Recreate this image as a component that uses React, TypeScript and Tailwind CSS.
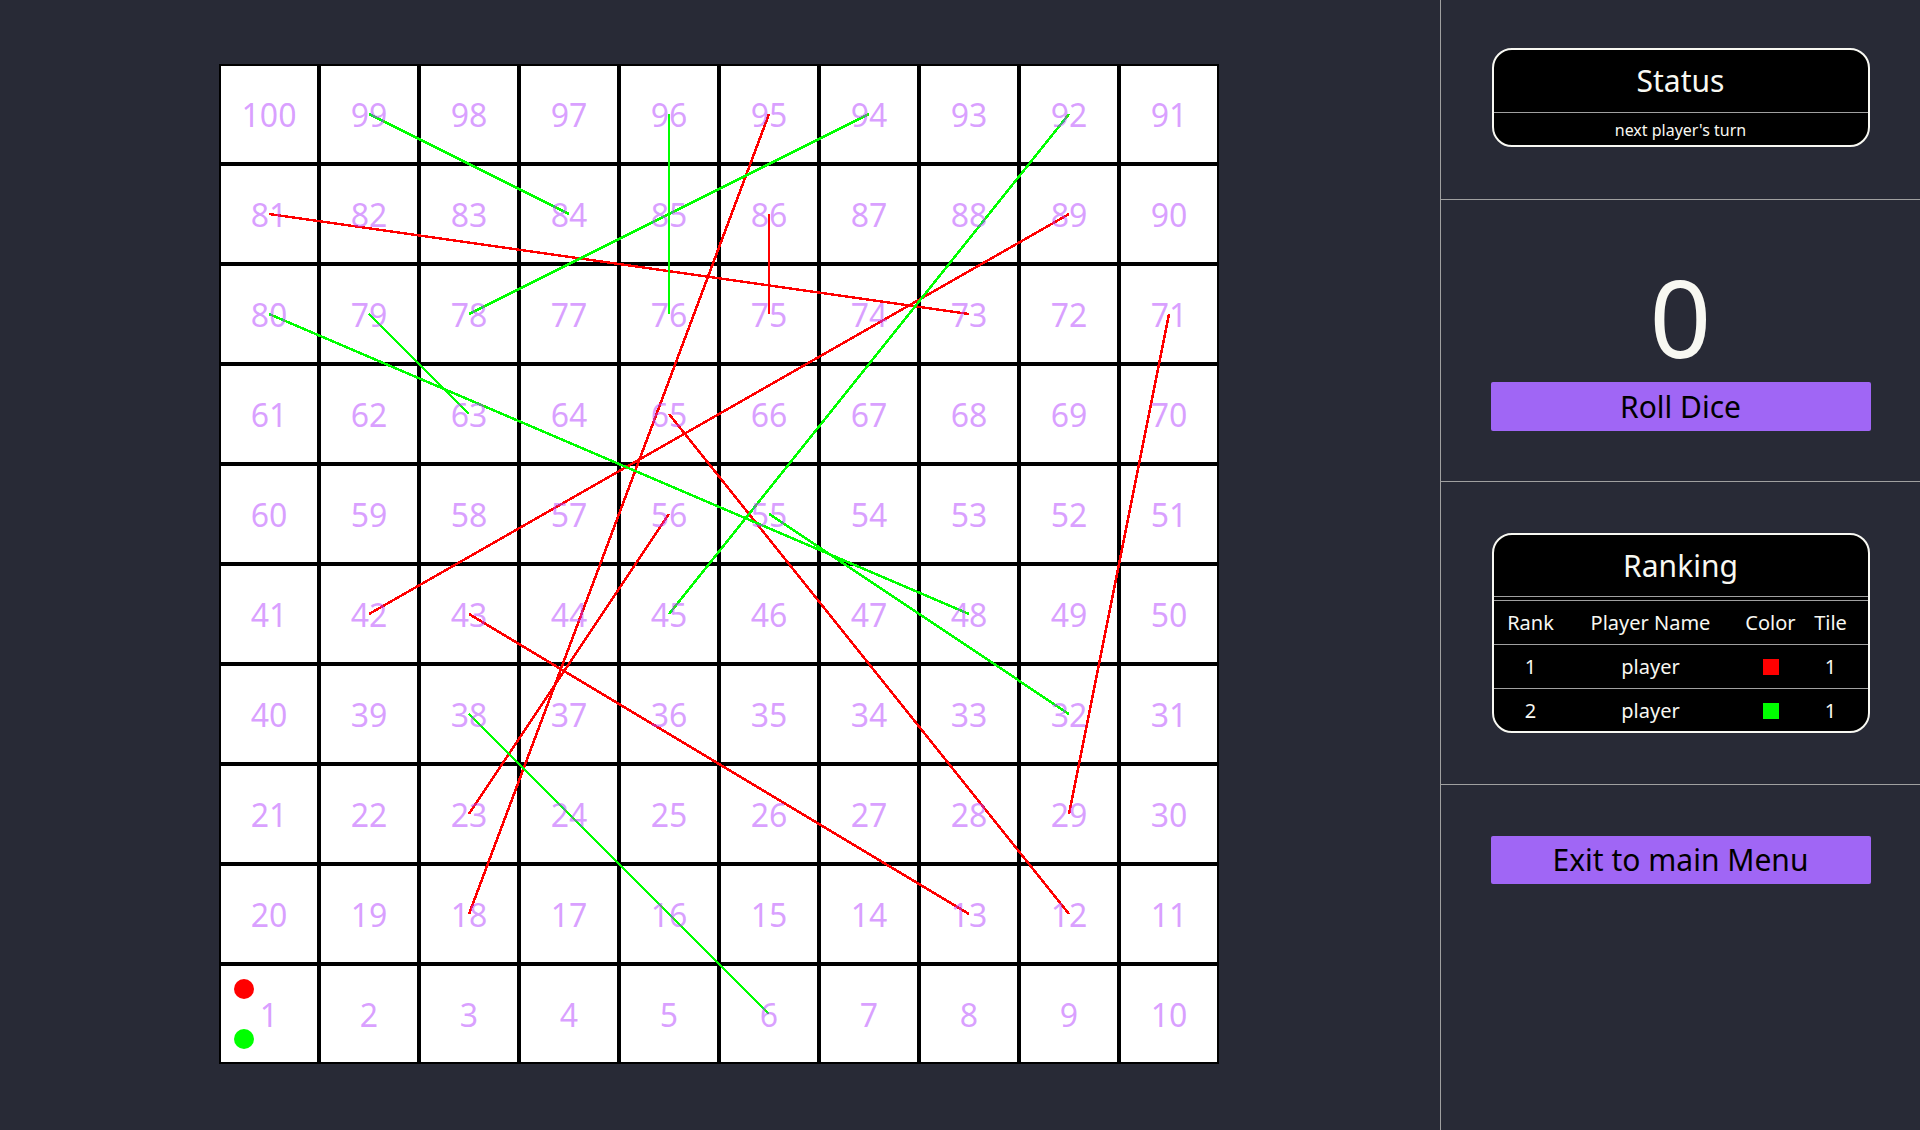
import React from "react";

const snakes: [number, number][] = [
  [81, 73],
  [86, 75],
  [89, 42],
  [95, 18],
  [71, 29],
  [65, 12],
  [56, 23],
  [43, 13],
];
const ladders: [number, number][] = [
  [99, 84],
  [96, 76],
  [94, 78],
  [92, 45],
  [79, 63],
  [80, 48],
  [55, 32],
  [38, 6],
];

function pos(n: number) {
  const rb = Math.floor((n - 1) / 10);
  const idx = (n - 1) % 10;
  const col = rb % 2 === 0 ? idx : 9 - idx;
  return { x: col * 100 + 50, y: (9 - rb) * 100 + 50 };
}

const cells: number[] = [];
for (let r = 0; r < 10; r++) {
  const base = 100 - 10 * r;
  for (let c = 0; c < 10; c++) {
    cells.push(r % 2 === 0 ? base - c : base - 9 + c);
  }
}

function Board() {
  return (
    <div className="relative grid h-[1000px] w-[1000px] grid-cols-10 bg-white">
      {cells.map((n) => (
        <div
          key={n}
          className="flex h-[100px] w-[100px] items-center justify-center border-2 border-black"
        >
          <span className="relative z-10 pt-[2px] text-[32px] leading-none text-[rgba(180,65,255,0.5)]">
            {n}
          </span>
        </div>
      ))}
      <svg
        className="absolute inset-0"
        width={1000}
        height={1000}
        viewBox="0 0 1000 1000"
        shapeRendering="crispEdges"
      >
        {snakes.map(([a, b]) => {
          const p = pos(a);
          const q = pos(b);
          return <line key={`s${a}`} x1={p.x} y1={p.y} x2={q.x} y2={q.y} stroke="#ff0000" strokeWidth={2.5} />;
        })}
        {ladders.map(([a, b]) => {
          const p = pos(a);
          const q = pos(b);
          return <line key={`l${a}`} x1={p.x} y1={p.y} x2={q.x} y2={q.y} stroke="#00ff00" strokeWidth={2.5} />;
        })}
      </svg>
      <div className="absolute left-[15px] top-[915px] z-20 h-[20px] w-[20px] rounded-full bg-[#ff0000]" />
      <div className="absolute left-[15px] top-[965px] z-20 h-[20px] w-[20px] rounded-full bg-[#00ff00]" />
    </div>
  );
}

function PurpleButton({ label }: { label: string }) {
  return (
    <div className="flex w-[380px] items-center justify-center rounded-[2px] bg-[#a066f5] text-[30px] leading-none text-black">
      {label}
    </div>
  );
}

export default function App() {
  return (
    <div className="flex h-[1130px] w-full overflow-hidden bg-[#282a36] font-['Noto_Sans',sans-serif]">
      <div className="flex flex-1 items-center justify-center pb-[2px] pr-[2px]">
        <Board />
      </div>
      <div className="flex w-[480px] flex-col border-l border-[#a0a0a0] text-[#f8f8f2]">
        <div className="flex h-[200px] justify-center border-b border-[#a0a0a0] pt-[48px]">
          <div className="flex h-[99px] w-[378px] flex-col overflow-hidden rounded-[20px] border-2 border-[#f8f8f2] bg-black">
            <div className="flex h-[62px] items-center justify-center text-[30px] leading-none">Status</div>
            <div className="h-px bg-[#a0a0a0]" />
            <div className="flex flex-1 items-center justify-center pt-px text-[16px] leading-none">
              next player's turn
            </div>
          </div>
        </div>
        <div className="flex h-[282px] flex-col items-center border-b border-[#a0a0a0] pt-[63px]">
          <div className="h-[108px] text-[108px] leading-none">0</div>
          <div className="mt-[11px] flex h-[49px]">
            <PurpleButton label="Roll Dice" />
          </div>
        </div>
        <div className="flex h-[303px] justify-center border-b border-[#a0a0a0] pt-[51px]">
          <div className="flex h-[200px] w-[378px] flex-col overflow-hidden rounded-[20px] border-2 border-[#f8f8f2] bg-black">
            <div className="flex h-[61px] items-center justify-center text-[30px] leading-none">Ranking</div>
            <div className="h-px bg-[#a0a0a0]" />
            <div className="h-[3px]" />
            <div className="h-px bg-[#a0a0a0]" />
            <div className="grid h-[43px] grid-cols-[74px_166px_74px_46px] items-center text-[20px] leading-none">
              <div className="text-center">Rank</div>
              <div className="text-center">Player Name</div>
              <div className="text-center">Color</div>
              <div className="text-center">Tile</div>
            </div>
            <div className="h-px bg-[#a0a0a0]" />
            <div className="grid h-[43px] grid-cols-[74px_166px_74px_46px] items-center text-[20px] leading-none">
              <div className="text-center">1</div>
              <div className="text-center">player</div>
              <div className="flex justify-center">
                <div className="h-[16px] w-[16px] bg-[#ff0000]" />
              </div>
              <div className="text-center">1</div>
            </div>
            <div className="h-px bg-[#a0a0a0]" />
            <div className="grid flex-1 grid-cols-[74px_166px_74px_46px] items-center pt-px text-[20px] leading-none">
              <div className="text-center">2</div>
              <div className="text-center">player</div>
              <div className="flex justify-center">
                <div className="h-[16px] w-[16px] bg-[#00ff00]" />
              </div>
              <div className="text-center">1</div>
            </div>
          </div>
        </div>
        <div className="flex flex-1 justify-center pt-[51px]">
          <div className="flex h-[48px]">
            <PurpleButton label="Exit to main Menu" />
          </div>
        </div>
      </div>
    </div>
  );
}
